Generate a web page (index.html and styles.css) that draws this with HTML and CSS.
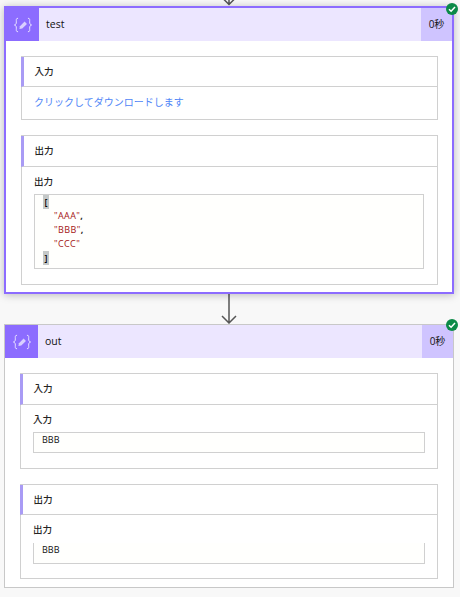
FILE: index.html
```html
<!DOCTYPE html>
<html lang="ja">
<head>
  <meta charset="UTF-8" />
  <title>test</title>
  <link rel="stylesheet" href="styles.css">
</head>
<body>
  <div class="arrow arrow-top">
    <svg width="16" height="14" viewBox="0 0 16 14"><path d="M8 0V12M1 5.5L8 12.5L15 5.5" /></svg>
  </div>

  <div class="card card-active">
    <div class="badge">
      <svg width="8" height="8" viewBox="0 0 8 8"><path d="M1 4.2L3.1 6.2L7 2" /></svg>
    </div>
    <div class="card-header">
      <div class="card-icon">
        <svg width="22" height="18" viewBox="0 0 24 20"><path class="brace" d="M6.5 2.5C4 2.5 4.6 4.5 4.6 6.5C4.6 8.5 4.2 9.5 2.5 10C4.2 10.5 4.6 11.5 4.6 13.5C4.6 15.5 4 17.5 6.5 17.5M17.5 2.5C20 2.5 19.4 4.5 19.4 6.5C19.4 8.5 19.8 9.5 21.5 10C19.8 10.5 19.4 11.5 19.4 13.5C19.4 15.5 20 17.5 17.5 17.5" /><path class="pencil" d="M8 14.5L8.6 11.4L13.8 6.2L16.4 8.8L11.2 14Z" /></svg>
      </div>
      <div class="card-title">test</div>
      <div class="card-time">0秒</div>
    </div>
    <div class="card-body">
      <div class="section">
        <div class="section-head">入力</div>
        <div class="section-link">クリックしてダウンロードします</div>
      </div>
      <div class="section">
        <div class="section-head head-tall">出力</div>
        <div class="section-body">
          <div class="field-label">出力</div>
          <div class="code-box">
            <div class="code-line"><span class="bracket">[</span></div>
            <div class="code-line indent"><span class="str">"AAA"</span><b>,</b></div>
            <div class="code-line indent"><span class="str">"BBB"</span><b>,</b></div>
            <div class="code-line indent"><span class="str">"CCC"</span></div>
            <div class="code-line"><span class="bracket">]</span></div>
          </div>
        </div>
      </div>
    </div>
  </div>

  <div class="arrow arrow-mid">
    <svg width="16" height="30" viewBox="0 0 16 30"><path d="M8 0V29M1 22L8 29L15 22" /></svg>
  </div>

  <div class="card">
    <div class="badge">
      <svg width="8" height="8" viewBox="0 0 8 8"><path d="M1 4.2L3.1 6.2L7 2" /></svg>
    </div>
    <div class="card-header">
      <div class="card-icon">
        <svg width="22" height="18" viewBox="0 0 24 20"><path class="brace" d="M6.5 2.5C4 2.5 4.6 4.5 4.6 6.5C4.6 8.5 4.2 9.5 2.5 10C4.2 10.5 4.6 11.5 4.6 13.5C4.6 15.5 4 17.5 6.5 17.5M17.5 2.5C20 2.5 19.4 4.5 19.4 6.5C19.4 8.5 19.8 9.5 21.5 10C19.8 10.5 19.4 11.5 19.4 13.5C19.4 15.5 20 17.5 17.5 17.5" /><path class="pencil" d="M8 14.5L8.6 11.4L13.8 6.2L16.4 8.8L11.2 14Z" /></svg>
      </div>
      <div class="card-title">out</div>
      <div class="card-time">0秒</div>
    </div>
    <div class="card-body">
      <div class="section">
        <div class="section-head head-tall">入力</div>
        <div class="section-body">
          <div class="field-label">入力</div>
          <div class="value-box">BBB</div>
        </div>
      </div>
      <div class="section">
        <div class="section-head">出力</div>
        <div class="section-body">
          <div class="field-label">出力</div>
          <div class="value-box value-cut">BBB</div>
        </div>
      </div>
    </div>
  </div>
</body>
</html>
```

FILE: styles.css
```css
* {
  box-sizing: border-box;
}

body {
  margin: 0;
  height: 597px;
  overflow: hidden;
  background-color: #f8f8f8;
  font-family: "Open Sans", "Noto Sans CJK JP", sans-serif;
  font-size: 10px;
  color: #252423;
}

.arrow {
  display: flex;
  justify-content: center;
  padding-right: 2px;
  overflow: hidden;
}

.arrow path {
  fill: none;
  stroke: #555;
  stroke-width: 1.5;
}

.arrow-top {
  height: 6px;
  align-items: flex-end;
}

.arrow-mid {
  height: 30px;
}

.card {
  position: relative;
  width: 450px;
  margin-left: 4px;
  background: #fff;
  border: 1px solid #c8c8c8;
}

.card-active {
  border: 2px solid #8c6cff;
  box-shadow: 0 1px 8px rgba(0, 0, 0, 0.25);
}

.badge {
  position: absolute;
  top: -6px;
  right: -5px;
  width: 12px;
  height: 12px;
  border-radius: 50%;
  background: #0b8a47;
  display: flex;
  align-items: center;
  justify-content: center;
  z-index: 1;
}

.card-active .badge {
  top: -5px;
  right: -6px;
}

.badge path {
  fill: none;
  stroke: #fff;
  stroke-width: 1.5;
}

.card-header {
  display: flex;
  align-items: center;
  height: 33px;
  background: #ece6ff;
}

.card-icon {
  width: 33px;
  height: 33px;
  background: #8c6cff;
  display: flex;
  align-items: center;
  justify-content: center;
}

.brace {
  fill: none;
  stroke: #f0ecff;
  stroke-width: 1;
}

.pencil {
  fill: #d9cfff;
}

.card-title {
  flex: 1;
  padding: 0 0 2px 7px;
  font-size: 10.5px;
  color: #111;
}

.card-time {
  width: 31px;
  height: 33px;
  line-height: 32px;
  text-align: center;
  background: #cfc4ff;
  color: #111;
}

.card-body {
  padding: 15px 15px 8px 15px;
  display: flex;
  flex-direction: column;
  gap: 15px;
}

.card-active .card-body {
  padding: 15px 14px 7px 15px;
}

.section {
  border: 1px solid #d0d0d0;
}

.section-head {
  height: 30px;
  line-height: 29px;
  padding-left: 10.5px;
  border-left: 3px solid #a99bf5;
  border-bottom: 1px solid #d0d0d0;
  margin-left: -1px;
  font-weight: 500;
  font-size: 9.5px;
}

.head-tall {
  height: 31px;
}

.section-link {
  height: 32px;
  line-height: 30px;
  padding-left: 12px;
  color: #4f86f7;
}

.section-body {
  padding: 7px 12px 15px 12px;
}

.card-active .section-body {
  padding-right: 13px;
}

.field-label {
  height: 20px;
  line-height: 16px;
  font-weight: 500;
  font-size: 9.5px;
}

.code-box {
  height: 75px;
  padding-left: 8px;
  border: 1px solid #d0d0d0;
  background: #fffffd;
  font-size: 9px;
}

.code-line {
  height: 14px;
  line-height: 14px;
}

.indent {
  padding-left: 11px;
}

.str {
  color: #a31515;
  letter-spacing: 0.4px;
}

.bracket {
  display: inline-block;
  width: 6px;
  height: 14px;
  line-height: 13px;
  text-align: center;
  background: #c4c8c8;
  color: #000;
  font-weight: 600;
}

.value-box {
  height: 21px;
  line-height: 13px;
  padding-left: 8px;
  border: 1px solid #d0d0d0;
  background: #fffffd;
  font-size: 9px;
  color: #111;
}

.value-cut {
  border-top: none;
  line-height: 14px;
  margin-top: 1px;
  margin-bottom: -1px;
}
```
